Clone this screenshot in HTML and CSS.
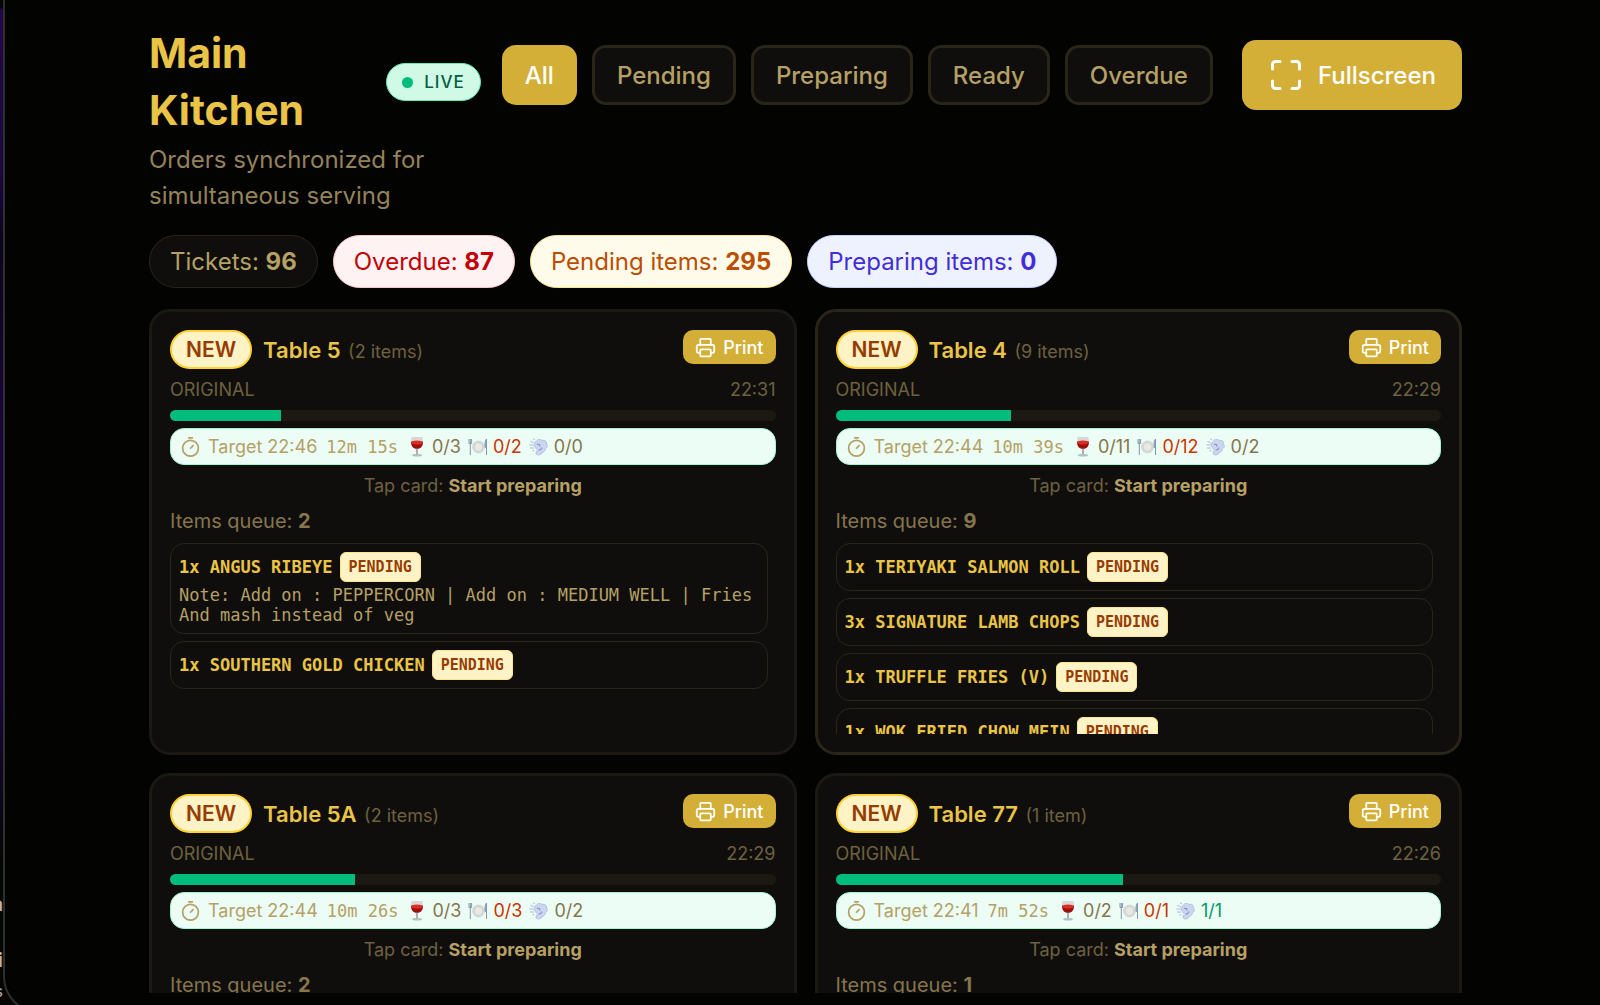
FILE: index.html
```
<!DOCTYPE html>
<html lang="en">
	<head>
		<title>Main Kitchen</title>
		<meta charset="utf-8">
		<meta name="viewport" content="width=device-width, initial-scale=1.0">
		<link rel="stylesheet" href="styles.css">
	</head>
	<body>
		<svg class="sprite" aria-hidden="true">
			<symbol id="i-full" viewBox="0 0 24 24"><path d="M8 3H5a2 2 0 0 0-2 2v3M21 8V5a2 2 0 0 0-2-2h-3M3 16v3a2 2 0 0 0 2 2h3M16 21h3a2 2 0 0 0 2-2v-3"/></symbol>
			<symbol id="i-print" viewBox="0 0 24 24"><path d="M6 18H4a2 2 0 0 1-2-2v-5a2 2 0 0 1 2-2h16a2 2 0 0 1 2 2v5a2 2 0 0 1-2 2h-2"/><path d="M6 9V3a1 1 0 0 1 1-1h10a1 1 0 0 1 1 1v6"/><rect x="6" y="14" width="12" height="8" rx="1"/></symbol>
			<symbol id="i-timer" viewBox="0 0 24 24"><path d="M10 2h4M12 14l3-3"/><circle cx="12" cy="14" r="9"/></symbol>
			<symbol id="e-wine" viewBox="0 0 20 20">
				<path d="M4.500 0h11c1.200 6.500-1 12-5.500 12S3.300 6.500 4.500 0z" fill="#d5d7d8"/>
				<path d="M4.100 4.500h11.800c.3 4.500-1.800 7.300-5.900 7.300S3.800 9 4.100 4.500z" fill="#9c1010"/>
				<ellipse cx="10" cy="5.500" rx="5.500" ry="2" fill="#dc2f20"/>
				<path d="M10 12v6" stroke="#8f9a9e" stroke-width="1.500"/>
				<ellipse cx="10" cy="18.300" rx="5" ry="1.200" fill="#b3bfc1"/>
			</symbol>
			<symbol id="e-plate" viewBox="0 0 20 20">
				<circle cx="10.500" cy="10" r="6.500" fill="#d5dbdc"/>
				<circle cx="10.500" cy="10" r="4.300" fill="#e9e9e1" stroke="#c3cac8" stroke-width=".6"/>
				<path d="M1 2v4.500M2.300 2v4.500M3.600 2v4.500M1 6.500h2.600M2.300 7v11" stroke="#8496ad" stroke-width="1" fill="none"/>
				<path d="M18.500 18V2c-1.500 1.500-1.700 5-1.300 8.500h1.300" stroke="#8496ad" stroke-width="1" fill="#a9b8c9"/>
			</symbol>
			<symbol id="e-puff" viewBox="0 0 20 20">
				<path d="M7 4.500C8.500 2 11.500 1.800 13 3.500c2.500-.8 5 .8 4.500 3.300 1.500 2 .8 4-1 5-.2 2.200-2 3.200-3.300 4.200-1.200 1.500-3.200 2.500-5 1.700-1.500-.7-1.700-2.500-.5-3.600 1.300.2 2-.3 2.300-1.300-2 .2-3.600-.8-3.500-2.500C4.500 9.500 4.500 6 7 4.500z" fill="#cbd5f0" stroke="#a5b2d8" stroke-width=".7"/>
				<path d="M8 7.500c1.700-.8 3.200.2 2.800 2M10 13c1.700-.2 2.700-1.200 3-2.500" stroke="#7f8fc0" stroke-width="1.100" fill="none"/>
				<path d="M1.500 4.500l3 1M.5 8h4M1 11h4M3.500 14l2-.7M4 1.500l2 1.500" stroke="#aab6d2" stroke-width="1"/>
			</symbol>
		</svg>

		<!-- edge of the page behind the board window -->
		<div class="behind" aria-hidden="true"><span>a</span><span>i</span><span class="dim">s</span></div>

		<div class="window">
			<main class="board">
				<header class="top">
					<div class="heading">
						<div class="title-row">
							<h1>Main Kitchen</h1>
							<span class="live">LIVE</span>
						</div>
						<p>Orders synchronized for simultaneous serving</p>
					</div>
					<div class="actions">
						<nav class="filters">
							<button type="button" class="active">All</button>
							<button type="button">Pending</button>
							<button type="button">Preparing</button>
							<button type="button">Ready</button>
							<button type="button">Overdue</button>
						</nav>
						<button type="button" class="fullscreen"><svg class="icon"><use href="#i-full"/></svg>Fullscreen</button>
					</div>
				</header>

				<div class="stats">
					<span class="stat">Tickets: <b>96</b></span>
					<span class="stat red">Overdue: <b>87</b></span>
					<span class="stat amber">Pending items: <b>295</b></span>
					<span class="stat indigo">Preparing items: <b>0</b></span>
				</div>

				<section class="tickets">
					<article class="card">
						<div class="card-head">
							<span class="new">NEW</span>
							<h2>Table 5 <span class="count">(2 items)</span></h2>
							<button type="button" class="print"><svg class="icon"><use href="#i-print"/></svg>Print</button>
						</div>
						<div class="meta"><span>ORIGINAL</span><time>22:31</time></div>
						<div class="bar"><div class="fill" style="width: 18.3%"></div></div>
						<div class="target">
							<svg class="icon"><use href="#i-timer"/></svg>
							<span>Target 22:46</span><span class="mono">12m 15s</span>
							<span class="course"><svg><use href="#e-wine"/></svg>0/3</span>
							<span class="course late"><svg><use href="#e-plate"/></svg>0/2</span>
							<span class="course"><svg><use href="#e-puff"/></svg>0/0</span>
						</div>
						<p class="tap">Tap card: <b>Start preparing</b></p>
						<p class="queue">Items queue: <b>2</b></p>
						<ul class="items">
							<li>
								<div class="item"><b>1x ANGUS RIBEYE</b><span class="state">PENDING</span></div>
								<p class="note">Note: Add on : PEPPERCORN | Add on : MEDIUM WELL | Fries And mash instead of veg</p>
							</li>
							<li><div class="item"><b>1x SOUTHERN GOLD CHICKEN</b><span class="state">PENDING</span></div></li>
						</ul>
					</article>

					<article class="card bright">
						<div class="card-head">
							<span class="new">NEW</span>
							<h2>Table 4 <span class="count">(9 items)</span></h2>
							<button type="button" class="print"><svg class="icon"><use href="#i-print"/></svg>Print</button>
						</div>
						<div class="meta"><span>ORIGINAL</span><time>22:29</time></div>
						<div class="bar"><div class="fill" style="width: 29%"></div></div>
						<div class="target">
							<svg class="icon"><use href="#i-timer"/></svg>
							<span>Target 22:44</span><span class="mono">10m 39s</span>
							<span class="course"><svg><use href="#e-wine"/></svg>0/11</span>
							<span class="course late"><svg><use href="#e-plate"/></svg>0/12</span>
							<span class="course"><svg><use href="#e-puff"/></svg>0/2</span>
						</div>
						<p class="tap">Tap card: <b>Start preparing</b></p>
						<p class="queue">Items queue: <b>9</b></p>
						<ul class="items">
							<li><div class="item"><b>1x TERIYAKI SALMON ROLL</b><span class="state">PENDING</span></div></li>
							<li><div class="item"><b>3x SIGNATURE LAMB CHOPS</b><span class="state">PENDING</span></div></li>
							<li><div class="item"><b>1x TRUFFLE FRIES (V)</b><span class="state">PENDING</span></div></li>
							<li><div class="item"><b>1x WOK FRIED CHOW MEIN</b><span class="state">PENDING</span></div></li>
						</ul>
					</article>

					<article class="card">
						<div class="card-head">
							<span class="new">NEW</span>
							<h2>Table 5A <span class="count">(2 items)</span></h2>
							<button type="button" class="print"><svg class="icon"><use href="#i-print"/></svg>Print</button>
						</div>
						<div class="meta"><span>ORIGINAL</span><time>22:29</time></div>
						<div class="bar"><div class="fill" style="width: 30.5%"></div></div>
						<div class="target">
							<svg class="icon"><use href="#i-timer"/></svg>
							<span>Target 22:44</span><span class="mono">10m 26s</span>
							<span class="course"><svg><use href="#e-wine"/></svg>0/3</span>
							<span class="course late"><svg><use href="#e-plate"/></svg>0/3</span>
							<span class="course"><svg><use href="#e-puff"/></svg>0/2</span>
						</div>
						<p class="tap">Tap card: <b>Start preparing</b></p>
						<p class="queue">Items queue: <b>2</b></p>
					</article>

					<article class="card">
						<div class="card-head">
							<span class="new">NEW</span>
							<h2>Table 77 <span class="count">(1 item)</span></h2>
							<button type="button" class="print"><svg class="icon"><use href="#i-print"/></svg>Print</button>
						</div>
						<div class="meta"><span>ORIGINAL</span><time>22:26</time></div>
						<div class="bar"><div class="fill" style="width: 47.5%"></div></div>
						<div class="target">
							<svg class="icon"><use href="#i-timer"/></svg>
							<span>Target 22:41</span><span class="mono">7m 52s</span>
							<span class="course"><svg><use href="#e-wine"/></svg>0/2</span>
							<span class="course late"><svg><use href="#e-plate"/></svg>0/1</span>
							<span class="course done"><svg><use href="#e-puff"/></svg>1/1</span>
						</div>
						<p class="tap">Tap card: <b>Start preparing</b></p>
						<p class="queue">Items queue: <b>1</b></p>
					</article>
				</section>
			</main>
		</div>
	</body>
</html>
```

FILE: styles.css
```
* {
	box-sizing: border-box;
}

body {
	margin: 0;
	display: flex;
	height: 100vh;
	overflow: hidden;
	background: #050504;
	color: #b5a065;
	font-family: Inter, "Liberation Sans", sans-serif;
}

h1, h2, p, ul {
	margin: 0;
	padding: 0;
}

button {
	font: inherit;
	cursor: pointer;
}

.sprite {
	position: absolute;
	width: 0;
	height: 0;
}

.icon {
	fill: none;
	stroke: currentColor;
	stroke-width: 2;
	stroke-linecap: round;
	stroke-linejoin: round;
	flex: none;
}

/* window frame */

.behind {
	width: 3px;
	flex: none;
	display: flex;
	flex-direction: column;
	justify-content: flex-end;
	align-items: flex-end;
	gap: 26px;
	padding-bottom: 4px;
	overflow: hidden;
	background: linear-gradient(#050504 8px, #22064a 9px, #1c0540 180px, #0c031c 240px, #1c0440 450px, #1c0440 680px, #050504 860px);
	color: #b9b0a8;
	font-size: 20px;
	font-weight: 700;
	line-height: 30px;
}

.behind .dim {
	font-size: 16px;
	font-weight: 400;
	line-height: 20px;
	margin-top: -20px;
}

.window {
	flex: 1;
	min-width: 0;
	height: calc(100vh + 8px);
	border: 2px solid #2d312e;
	border-width: 0 0 2px 2px;
	border-bottom-left-radius: 36px;
	background: #030302;
	overflow: hidden;
}

.board {
	height: calc(100vh - 12px);
	padding: 25px 138px 0 144px;
	overflow: hidden;
}

/* header */

.top {
	display: flex;
	align-items: flex-start;
	gap: 21px;
}

.heading {
	flex: 1;
	min-width: 0;
}

.title-row {
	display: flex;
	align-items: center;
	justify-content: space-between;
	gap: 14px;
}

h1 {
	color: #e9c446;
	font-size: 41px;
	font-weight: 700;
	line-height: 57px;
}

.live {
	display: flex;
	align-items: center;
	gap: 11px;
	height: 38px;
	padding: 0 15px;
	border: 1px solid #5ee9b5;
	border-radius: 19px;
	background: #d0fae5;
	color: #006045;
	font-size: 17px;
	font-weight: 500;
	letter-spacing: 1px;
}

.live::before {
	content: "";
	width: 11px;
	height: 11px;
	border-radius: 50%;
	background: #00bc7d;
}

.heading p {
	margin-top: 3px;
	color: #94825a;
	font-size: 24px;
	line-height: 36px;
}

.actions {
	display: flex;
	align-items: center;
	gap: 29px;
	margin-top: 15px;
	font-size: 24px;
	font-weight: 500;
}

.filters {
	display: flex;
	gap: 15px;
}

.filters button {
	height: 60px;
	padding: 0 22px;
	border: 3px solid #2a2519;
	border-radius: 14px;
	background: #100e0c;
	color: #b5a065;
}

.filters .active {
	padding: 0 20px;
	border-color: #d4af37;
	background: #d4af37;
	color: #fff;
}

.fullscreen {
	display: flex;
	align-items: center;
	gap: 14px;
	height: 70px;
	padding: 0 26px;
	border: 0;
	border-radius: 14px;
	background: #d4af37;
	color: #fff;
}

.fullscreen .icon {
	width: 36px;
	height: 36px;
}

/* totals */

.stats {
	display: flex;
	gap: 15px;
	margin-top: 21px;
}

.stat {
	height: 53px;
	padding: 0 20px;
	border: 1px solid #2a2519;
	border-radius: 27px;
	background: #100e0c;
	font-size: 24px;
	line-height: 51px;
	white-space: nowrap;
}

.stat.red {
	border-color: #ffc9c9;
	background: #fef2f2;
	color: #c10007;
}

.stat.amber {
	border-color: #fee685;
	background: #fffbeb;
	color: #bb4d00;
}

.stat.indigo {
	border-color: #c6d2ff;
	background: #eef2ff;
	color: #432dd7;
}

/* tickets */

.tickets {
	display: grid;
	grid-template-columns: 1fr 1fr;
	grid-auto-rows: 446px;
	gap: 18px;
	margin-top: 21px;
}

.card {
	display: flex;
	flex-direction: column;
	min-width: 0;
	padding: 18px;
	border: 3px solid #1c1912;
	border-radius: 21px;
	background: #100e0c;
	font-size: 18px;
}

.card.bright {
	border-color: #2a2519;
}

.card-head {
	display: flex;
	align-items: center;
	gap: 11px;
	height: 39px;
}

.new {
	height: 39px;
	padding: 0 14px;
	border: 2px solid #ffd230;
	border-radius: 20px;
	background: #fef3c6;
	color: #973c00;
	font-size: 21px;
	font-weight: 600;
	line-height: 35px;
}

h2 {
	color: #e9c446;
	font-size: 22px;
	font-weight: 600;
}

.count {
	margin-left: 2px;
	color: #6d613f;
	font-size: 18px;
	font-weight: 400;
}

.print {
	display: flex;
	align-items: center;
	align-self: flex-start;
	gap: 7px;
	height: 34px;
	margin-left: auto;
	padding: 0 12px;
	border: 0;
	border-radius: 10px;
	background: #d4af37;
	color: #fff;
	font-size: 18px;
	font-weight: 500;
}

.print .icon {
	width: 21px;
	height: 21px;
}

.meta {
	display: flex;
	justify-content: space-between;
	margin-top: 9px;
	color: #6d613f;
	line-height: 24px;
}

.bar {
	height: 11px;
	margin-top: 8px;
	border-radius: 6px;
	background: #1c1912;
	overflow: hidden;
	flex: none;
}

.fill {
	height: 100%;
	background: #00bc7d;
}

.target {
	display: flex;
	align-items: center;
	gap: 7px;
	height: 37px;
	margin-top: 7px;
	padding: 0 9px;
	border: 1px solid #a4f4cf;
	border-radius: 14px;
	background: #ecfdf5;
	color: #b5a065;
	white-space: nowrap;
	flex: none;
}

.target .icon {
	width: 21px;
	height: 21px;
}

.mono {
	margin: 0 2px;
	font-family: "DejaVu Sans Mono", monospace;
	font-size: 17px;
}

.course {
	display: flex;
	align-items: center;
	gap: 5px;
	color: #85754c;
}

.course svg {
	width: 20px;
	height: 20px;
}

.course.late {
	color: #ca3500;
}

.course.done {
	color: #009966;
}

.tap {
	margin-top: 9px;
	color: #6d613f;
	line-height: 24px;
	text-align: center;
}

.tap b {
	color: #b5a065;
	font-weight: 700;
}

.queue {
	margin-top: 9px;
	color: #85754c;
	font-size: 20px;
	line-height: 28px;
}

.items {
	flex: 1;
	min-height: 0;
	display: flex;
	flex-direction: column;
	gap: 7px;
	margin-top: 8px;
	padding-right: 8px;
	overflow: hidden;
	list-style: none;
	font-family: "DejaVu Sans Mono", monospace;
	font-size: 17px;
}

.items li {
	flex: none;
	padding: 8px;
	border: 1px solid #2a2519;
	border-radius: 14px;
}

.item {
	display: flex;
	align-items: center;
	gap: 7px;
	color: #e9c446;
}

.state {
	height: 30px;
	padding: 0 8px;
	border: 1px solid #fee685;
	border-radius: 6px;
	background: #fef3c6;
	color: #973c00;
	font-size: 15px;
	font-weight: 700;
	line-height: 28px;
}

.note {
	margin-top: 3px;
	line-height: 20px;
}
```
